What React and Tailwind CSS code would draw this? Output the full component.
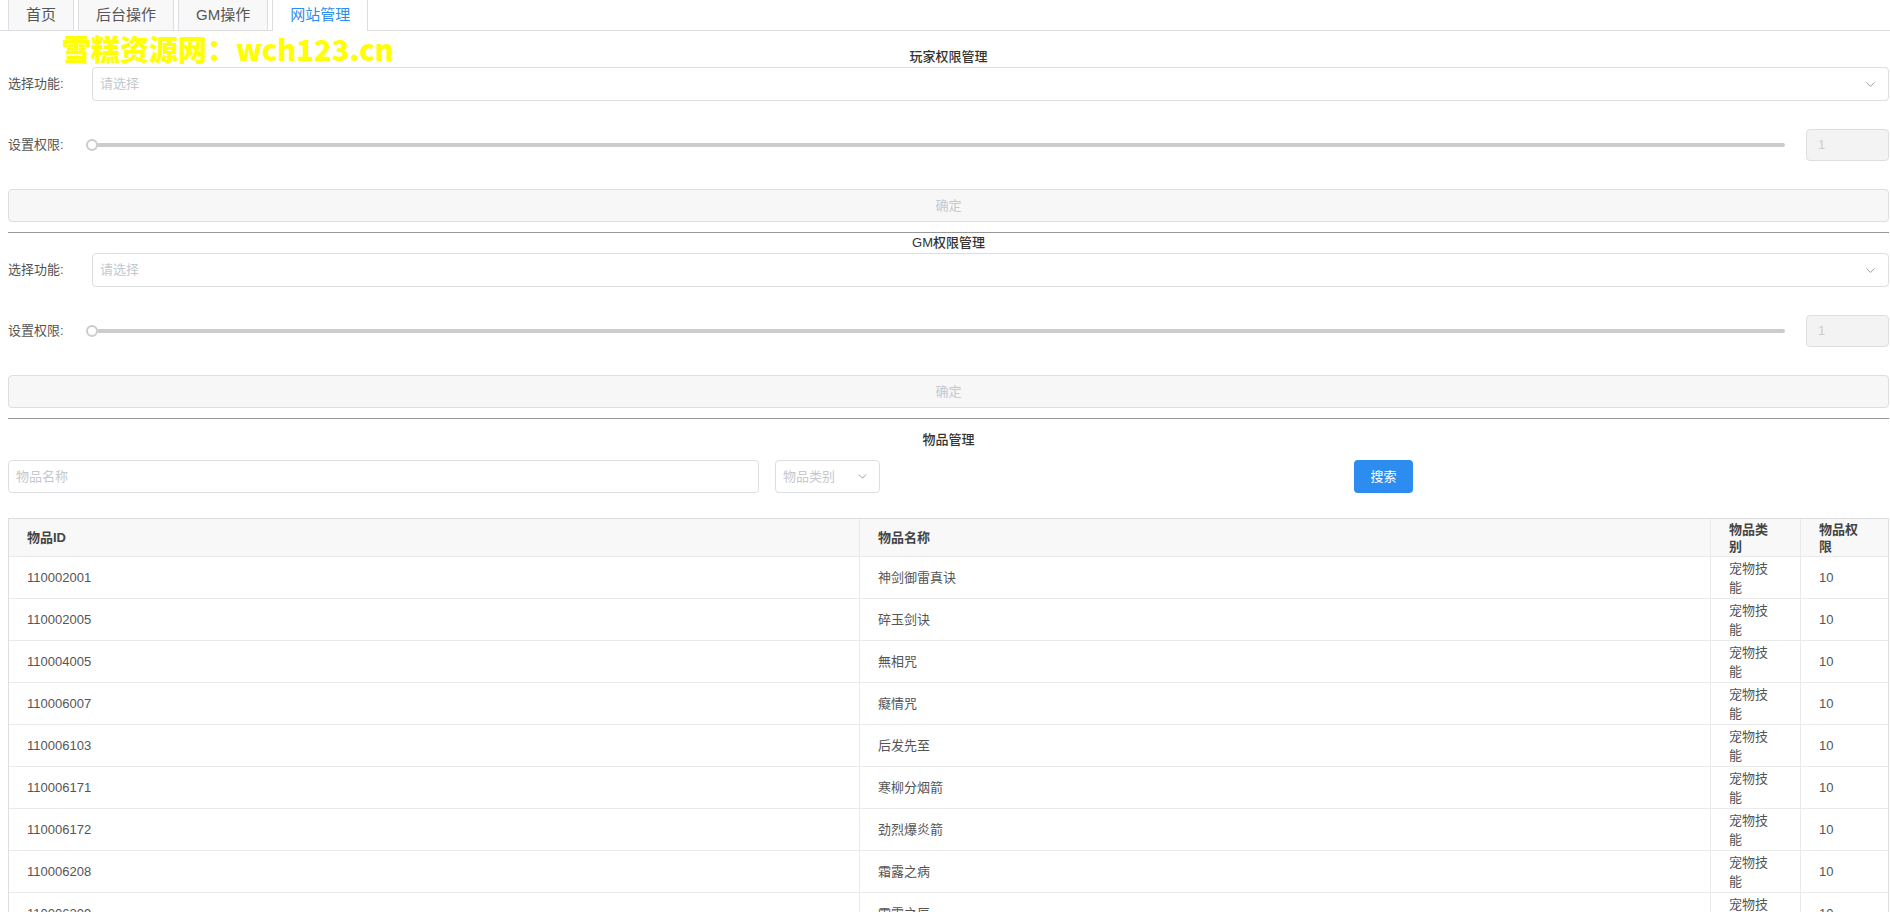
import { ChevronDown } from 'lucide-react';

const rows = [
  ['110002001', '神剑御雷真诀'],
  ['110002005', '碎玉剑诀'],
  ['110004005', '無相咒'],
  ['110006007', '癡情咒'],
  ['110006103', '后发先至'],
  ['110006171', '寒柳分烟箭'],
  ['110006172', '劲烈爆炎箭'],
  ['110006208', '霜露之病'],
  ['110006209', '霜露之辰'],
];

const tabs = ['首页', '后台操作', 'GM操作', '网站管理'];

function PermSection({ title }) {
  return (
    <div>
      <div className="h-5 leading-5 text-center font-medium text-[#333]">{title}</div>
      <div className="flex items-center h-[34px]">
        <div className="w-[84px] shrink-0">选择功能:</div>
        <div className="flex-1 h-full flex items-center justify-between border border-[#dcdee2] rounded-[4px] pl-[7px] pr-[10px]">
          <span className="text-[#c5c8ce]">请选择</span>
          <ChevronDown size={15} strokeWidth={1.3} className="text-[#808695]" />
        </div>
      </div>
      <div className="flex items-center h-[32px] mt-[28px]">
        <div className="w-[78px] shrink-0">设置权限:</div>
        <div className="flex-1 flex items-center">
          <div className="w-[12px] h-[12px] rounded-full border-2 border-[#ccc] bg-white shrink-0" />
          <div className="flex-1 h-[4px] bg-[#ccc] rounded-r-full" />
        </div>
        <div className="w-[83px] h-full ml-[21px] border border-[#dcdee2] bg-[#f3f3f3] rounded-[4px] flex items-center pl-[11px] text-[#ccc]">1</div>
      </div>
      <div className="mt-[28px] h-[33px] border border-[#dcdee2] bg-[#f7f7f7] rounded-[4px] flex items-center justify-center text-[#c5c8ce]">确定</div>
      <div className="mt-[10px] border-t border-[#999]" />
    </div>
  );
}

export default function App() {
  return (
    <div className="relative h-screen overflow-hidden bg-white text-[13px] text-[#555] font-['Liberation_Sans','Noto_Sans_CJK_SC',sans-serif]">
      <div className="flex items-end gap-1 pl-2 h-[31px] border-b border-[#dcdee2]">
        {tabs.map((t, i) => (
          <div
            key={t}
            className={
              i === 3
                ? 'h-[31px] -mb-px px-[17px] flex items-center bg-white border-x border-[#dcdee2] text-[15px] text-[#2d8cf0]'
                : 'h-[30px] px-[17px] flex items-center bg-[#f8f8f9] border-x border-[#dcdee2] text-[15px] text-[#555]'
            }
          >
            {t}
          </div>
        ))}
      </div>

      <div className="absolute left-[62px] top-[31px] text-[29px] leading-[34px] font-black text-[#ffff00] font-['Noto_Sans_CJK_SC',sans-serif]">
        雪糕资源网：wch123.cn
      </div>

      <div className="pl-2 pr-px mt-4">
        <PermSection title="玩家权限管理" />
        <PermSection title="GM权限管理" />

        <div className="mt-[11px] h-5 leading-5 text-center font-medium text-[#333]">物品管理</div>
        <div className="mt-[10px] flex items-center h-[33px]">
          <div className="w-[751px] h-full border border-[#dcdee2] rounded-[4px] flex items-center pl-[7px] text-[#c5c8ce]">物品名称</div>
          <div className="w-[105px] h-full ml-4 border border-[#dcdee2] rounded-[4px] flex items-center justify-between pl-[7px] pr-[10px] text-[#c5c8ce]">
            <span>物品类别</span>
            <ChevronDown size={13} strokeWidth={1.5} className="text-[#808695]" />
          </div>
          <div className="w-[59px] h-full ml-[474px] bg-[#2d8cf0] rounded-[4px] flex items-center justify-center text-white">搜索</div>
        </div>

        <div className="mt-[25px] border border-[#dcdee2] border-b-0">
          <div className="flex h-[38px] bg-[#f8f8f9] border-b border-[#e8eaec] font-semibold text-[#444]">
            <div className="w-[851px] pl-[18px] flex items-center border-r border-[#e8eaec]">物品ID</div>
            <div className="w-[851px] pl-[18px] flex items-center border-r border-[#e8eaec]">物品名称</div>
            <div className="w-[90px] pl-[18px] flex items-center border-r border-[#e8eaec] leading-[17px]">
              <div className="w-[44px]">物品类别</div>
            </div>
            <div className="flex-1 pl-[18px] flex items-center leading-[17px]">
              <div className="w-[44px]">物品权限</div>
            </div>
          </div>
          {rows.map(([id, name]) => (
            <div key={id} className="flex h-[42px] border-b border-[#e8eaec]">
              <div className="w-[851px] pl-[18px] flex items-center border-r border-[#e8eaec]">{id}</div>
              <div className="w-[851px] pl-[18px] flex items-center border-r border-[#e8eaec]">{name}</div>
              <div className="w-[90px] pl-[18px] flex items-center border-r border-[#e8eaec] leading-[19px]">
                <div className="w-[44px]">宠物技能</div>
              </div>
              <div className="flex-1 pl-[18px] flex items-center">10</div>
            </div>
          ))}
        </div>
      </div>
    </div>
  );
}
